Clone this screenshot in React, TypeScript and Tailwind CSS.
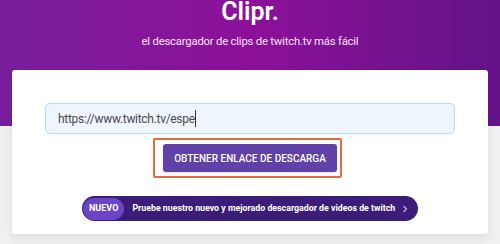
export default function App() {
  return (
    <div className="w-[500px] h-[244px] overflow-hidden bg-[#eef0f1] font-['Roboto',sans-serif]">
      {/* Header */}
      <div className="h-[126px] bg-gradient-to-r from-[#781d9b] via-[#8d0f99] to-[#63128a] flex flex-col items-center">
        <h1 className="text-white font-semibold text-[25px] leading-[28px] mt-[-2px]">Clipr.</h1>
        <p className="text-[#f7e2f7] text-[11.3px] tracking-[-0.2px] font-normal mt-[8px] leading-[16px]">
          el descargador de clips de twitch.tv más fácil
        </p>
      </div>

      {/* Card */}
      <div className="mx-3 -mt-[56px] bg-white rounded-[3px] shadow-[0_4px_10px_rgba(0,0,0,0.08)] px-[33px] pt-[33px] pb-[13px] flex flex-col items-center">
        <div className="w-full h-[31px] rounded-[5px] border border-[#b9d8f5] bg-[#eef5fc] flex items-center pl-3 text-[12px] tracking-[-0.3px] text-[#4a4a4a]">
          <span>https://www.twitch.tv/espe</span>
          <span className="w-px h-[17px] bg-[#333]" />
        </div>

        <div className="relative mt-[10px]">
          <button className="h-[28px] w-[174px] rounded-[3px] bg-[#6041a8] text-white text-[10px] font-medium whitespace-nowrap shadow-sm">
            OBTENER ENLACE DE DESCARGA
          </button>
          <div className="absolute -left-[10px] -right-[5px] -top-[6px] -bottom-[6px] border-2 border-[#e26a42] rounded-[2px] pointer-events-none" />
        </div>

        <div className="mt-[24px] h-[25px] w-[336px] rounded-full bg-[#3b1c79] flex items-center pl-px pr-[9px]">
          <span className="h-[22px] px-[6px] rounded-full bg-[#6a45c8] text-white text-[9px] font-bold flex items-center">
            NUEVO
          </span>
          <span className="ml-[8px] text-white text-[8.8px] font-bold whitespace-nowrap">
            Pruebe nuestro nuevo y mejorado descargador de videos de twitch
          </span>
          <svg className="ml-auto w-[8px] h-[8px] text-[#b9a6e6]" viewBox="0 0 8 8" fill="none" stroke="currentColor" strokeWidth="1.3">
            <path d="M2.5 1l3 3-3 3" />
          </svg>
        </div>
      </div>
    </div>
  );
}
